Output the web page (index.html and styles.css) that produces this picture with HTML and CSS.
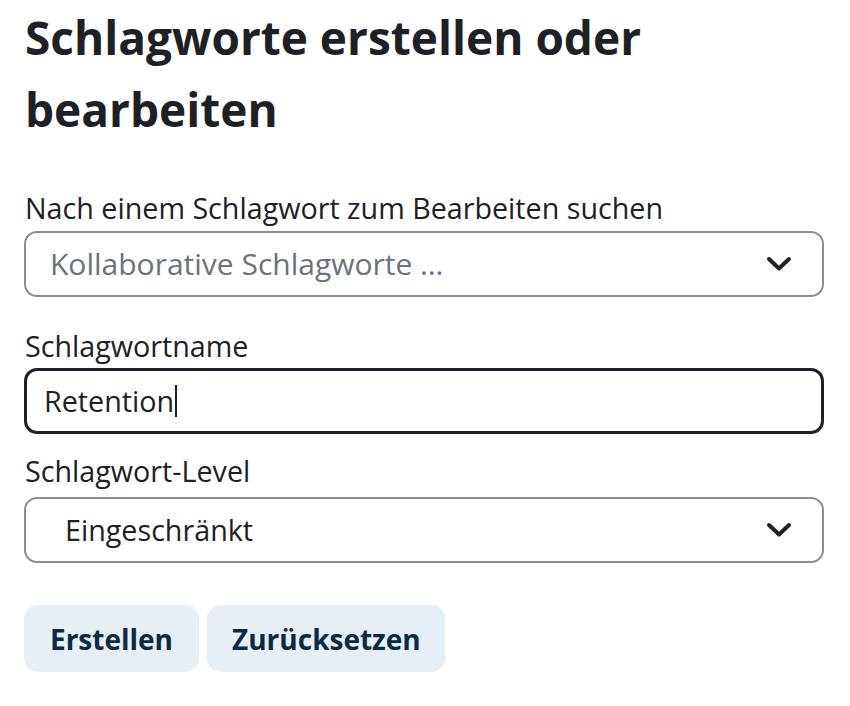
FILE: index.html
```html
<!DOCTYPE html>
<html lang="de">
<head>
<meta charset="utf-8">
<title>Schlagworte erstellen oder bearbeiten</title>
<link rel="stylesheet" href="styles.css">
</head>
<body>
<main class="page">
  <h2 class="title">Schlagworte erstellen oder bearbeiten</h2>
  <form class="form">
    <div class="field field-search">
      <label class="label">Nach einem Schlagwort zum Bearbeiten suchen</label>
      <div class="select select-search">
        <span class="placeholder">Kollaborative Schlagworte …</span>
        <svg class="chev" viewBox="0 0 26 16" width="26" height="16"><path d="M3 3 L13 12.5 L23 3" fill="none" stroke="#1d2125" stroke-width="4" stroke-linecap="round" stroke-linejoin="round"/></svg>
      </div>
    </div>
    <div class="field field-name">
      <label class="label">Schlagwortname</label>
      <div class="input"><span class="value">Retention</span><span class="caret"></span></div>
    </div>
    <div class="field field-level">
      <label class="label">Schlagwort-Level</label>
      <div class="select select-level">
        <span class="value">Eingeschränkt</span>
        <svg class="chev" viewBox="0 0 26 16" width="26" height="16"><path d="M3 3 L13 12.5 L23 3" fill="none" stroke="#1d2125" stroke-width="4" stroke-linecap="round" stroke-linejoin="round"/></svg>
      </div>
    </div>
    <div class="buttons">
      <button type="button" class="btn btn-create">Erstellen</button>
      <button type="button" class="btn btn-reset">Zurücksetzen</button>
    </div>
  </form>
</main>
</body>
</html>
```
FILE: styles.css
```css
* { box-sizing: border-box; }
html, body { margin: 0; padding: 0; background: #ffffff; }
body {
  font-family: "Open Sans", "Lato", sans-serif;
  color: #1d2125;
}
.page {
  width: 850px;
  padding: 1px 26px 0 24px;
}
.title {
  margin: 0 0 43px 1px;
  font-size: 46px;
  line-height: 72px;
  font-weight: 700;
  color: #1d2125;
}
.form { display: flex; flex-direction: column; }
.label {
  display: block;
  font-size: 28.7px;
  line-height: 40px;
  margin-left: 1px;
}
.field-search .label { margin-bottom: 3px; }
.field-name { margin-top: 29px; }
.field-name .label { margin-bottom: 2px; }
.field-level { margin-top: 17px; }
.field-level .label { margin-bottom: 6px; }
.select, .input {
  width: 800px;
  height: 66px;
  display: flex;
  align-items: center;
  border-radius: 13px;
  font-size: 28.7px;
  line-height: 40px;
}
.select {
  border: 2px solid #8a8d91;
  justify-content: space-between;
  padding-right: 30px;
}
.select-search { padding-left: 24px; }
.select-level { padding-left: 39px; }
.placeholder { color: #6a737b; font-size: 30px; }
.input {
  border: 3px solid #1d2125;
  padding-left: 17px;
}
.caret {
  display: inline-block;
  width: 2px;
  height: 32px;
  background: #1d2125;
  margin-left: 1px;
}
.chev { display: block; }
.buttons {
  display: flex;
  gap: 8px;
  margin-top: 42px;
}
.btn {
  height: 67px;
  border: none;
  border-radius: 14px;
  background: #e6eef6;
  color: #0c2a42;
  font-family: inherit;
  font-size: 28px;
  font-weight: 700;
  padding: 0 25px;
}
.btn-create { width: 175px; }
.btn-reset { width: 238px; }
```
